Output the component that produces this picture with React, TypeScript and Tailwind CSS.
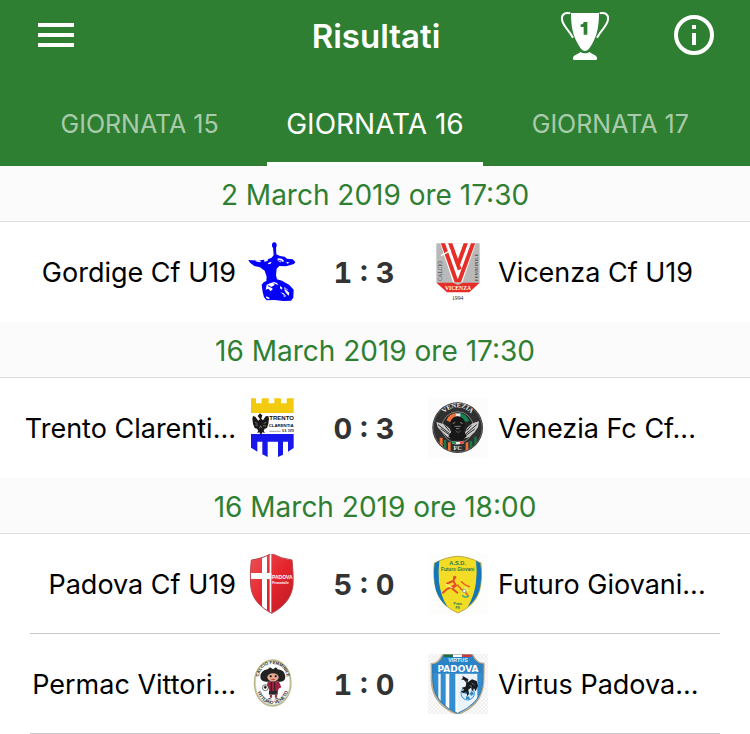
import { useState, type ReactNode } from "react";

type Team = { name: string; crest: ReactNode };
type Match = { home: Team; away: Team; score: string };
type Day = { label: string; matches: Match[]; divided: boolean };

function Crest({ title, box, children }: { title: string; box: string; children: ReactNode }) {
  return (
    <svg viewBox={box} className="block size-[60px]" role="img" aria-label={title} fontFamily="'Liberation Sans', Arial, sans-serif">
      {children}
    </svg>
  );
}

const gordige = (
  <Crest title="Gordige" box="6 21 180 180">
    <ellipse cx="103" cy="31" rx="7" ry="9" fill="#0500fa" />
    <path d="M99 36h9l1 22 11 5 14 2 7 6 17 2 8 8-4 6-24 7-20-1-8 8-2 20 3 12 15 4 22 13 13 14-1 24-7 9-22 1-28-3-23 1-8-9-4-16-3-22 6-7 8-4 1-13-6-18-14-10-17-4-13-10-5-8 28 2 32-5 10-4 6-8z" fill="#0500fa" />
    <g fill="#fff">
      <path d="M50 75l14 3-5 4-12-3zM72 73l13-2-3 7-9 2zM84 84l11-4-3 6-7 2zM113 70l13 1 7 8-12 3-8-5zM139 80l10 3-8 3z" />
      <path d="M80 149l10-4 12-4 9 3 4 6-10-1-10 6 3 8-6 6-7-8-8 3zM120 153l7 5-1 6-6-4zM133 156l9 7 6 11-2 8-6-6-6-9zM121 172l10 3 7 8-5 4-4-6zM79 184l11 5-4 3-8-3z" />
    </g>
    <path d="M84 152l12 6M101 146l12 5M135 161l12 10M122 174l12 9M115 76l11 3" fill="none" stroke="#0500fa" strokeWidth="3" />
  </Crest>
);

const vicenza = (
  <Crest title="Vicenza" box="9 21 180 180">
    <defs>
      <clipPath id="vicenzaField"><path d="M34 25h130v117H34z" /></clipPath>
    </defs>
    <path d="M34 25h130v117l-32 29H66l-32-29z" fill="#b9b9b9" />
    <g clipPath="url(#vicenzaField)">
      <path d="M44 20h110L110 148H86z" fill="#fff" />
      <path d="M52 20l44 124M74 20l30 84M146 20l-46 126M124 20l-26 72" fill="none" stroke="#e52e28" strokeWidth="12" />
      <path d="M48 62l30-16" stroke="#fff" strokeWidth="4" />
    </g>
    <path d="M34 143h50l15 7 15-7h50l-31 29H66z" fill="#e52e28" />
    <text x="99" y="166" textAnchor="middle" fontSize="17" fontWeight="700" fontFamily="'Liberation Serif', serif" fill="#fff">VICENZA</text>
    <text transform="translate(51 138) rotate(-90)" fontSize="16" fontFamily="'Liberation Serif', serif" fill="#333">CALCIO</text>
    <text transform="translate(160 139) rotate(-90)" fontSize="15" fontFamily="'Liberation Serif', serif" fill="#333">FEMMINILE</text>
    <text x="98" y="194" textAnchor="middle" fontSize="17" fontFamily="'Liberation Serif', serif" fill="#222">1994</text>
  </Crest>
);

const trento = (
  <Crest title="Trento Clarentia" box="6 24 180 180">
    <path d="M33 25h15v15h17V25h21v15h17V25h20v15h17V25h21v44H33z" fill="#f2ca10" />
    <path d="M33 69h128v62H33z" fill="#fff" />
    <path d="M33 132h128v42l-17 11v-30h-15v39l-15 7v-46H83v46l-16-8v-38H52v30l-19-12z" fill="#1717ec" />
    <g fill="#171717">
      <path d="M60 70l7 6-3 10 5 5 8-12 8-1 2 8-2 15-4 13-7 2-3 6 4 7-8-2-4 9-5-9-7 2 4-7-4-6-7-2-5-13-2-15 2-8 7 2 9 12 5-5-7-9z" />
    </g>
    <path d="M44 97l8 3M46 106l8-1M71 100l8-3M69 107l9 1M58 115l4-8 4 8" fill="none" stroke="#999" strokeWidth="2" />
    <g fill="#111" fontWeight="700">
      <text x="88" y="91" fontSize="18">TRENTO</text>
      <text x="86" y="111" fontSize="13">CLARENTIA</text>
      <text x="126" y="127" fontSize="8">S.S. 1978</text>
    </g>
    <path d="M88 124h34" stroke="#777" strokeWidth="2" />
  </Crest>
);

const venezia = (
  <Crest title="Venezia FC" box="9 24 180 180">
    <defs>
      <clipPath id="veneziaDisc"><circle cx="98" cy="113" r="73" /></clipPath>
      <path id="veneziaArc" d="M45 105A53 53 0 0 1 151 105" />
    </defs>
    <path d="M9 24h180v180H9z" fill="#fcfcfc" />
    <circle cx="98" cy="113" r="76" fill="#303030" />
    <circle cx="98" cy="113" r="73" fill="none" stroke="#777" strokeWidth="2" />
    <g clipPath="url(#veneziaDisc)">
      <path d="M44 143h9v45h-9zM69 157h8v40h-8zM122 157h8v40h-8z" fill="#ec7135" />
      <path d="M56 150h8v45h-8zM134 153h8v35h-8zM148 140h7v30h-7z" fill="#1a7849" />
    </g>
    <circle cx="98" cy="112" r="47" fill="#242424" stroke="#aaa" strokeWidth="2" />
    <path d="M64 91q8-20 28-22l1 13q-12 3-17 15z" fill="#ec7136" />
    <path d="M105 69q20 3 28 24l-11 3q-7-11-17-15z" fill="#188153" />
    <path d="M92 70h14v10H92z" fill="#e8e8e8" />
    <path d="M34 96q24 4 40 20l14 31-20-5-17-16-13-14zM162 94q-22 4-36 20l-14 33 20-5 17-15 10-15z" fill="#c7c7c7" />
    <path d="M39 104l35 27M47 116l30 21M155 104l-33 28M149 117l-27 20M59 106l15 18M139 106l-14 16" stroke="#323232" strokeWidth="3" />
    <path d="M76 97q4-17 22-18 18 2 21 18l-2 25 8 17-13 12H84l-14-12 11-17z" fill="#171717" />
    <path d="M83 101l8-4M105 97l8 4M89 109h18M93 116h10" stroke="#bbb" strokeWidth="2" />
    <path d="M92 122q7 10 15 0" fill="none" stroke="#777" strokeWidth="2" />
    <path d="M81 153q18 5 36-1v8q-19 6-36 1z" fill="#eee" />
    <path d="M81 153l12 2v7l-12-1z" fill="#249157" />
    <path d="M105 155l12-3v8l-12 2z" fill="#e44e42" />
    <text fontSize="20" fontWeight="700" fontFamily="'Liberation Serif', serif" fill="#eee">
      <textPath href="#veneziaArc" startOffset="50%" textAnchor="middle">VENEZIA</textPath>
    </text>
    <text x="98" y="180" fontSize="19" textAnchor="middle" fontWeight="700" fontFamily="'Liberation Serif', serif" fill="#eee">FC</text>
  </Crest>
);

const padovaOutline = "M34 42q34-4 60-20 28 16 62 20 5 48 3 76-4 33-27 57-16 16-37 27-22-11-37-27-24-24-26-57-3-35 2-76z";

const padova = (
  <Crest title="Padova" box="6 24 180 180">
    <defs>
      <clipPath id="padovaShield"><path d={padovaOutline} /></clipPath>
      <linearGradient id="padovaRed" x1="0" y1="0" x2="1" y2="1"><stop stopColor="#ef5358" /><stop offset=".5" stopColor="#e4252d" /><stop offset="1" stopColor="#b91b24" /></linearGradient>
    </defs>
    <g clipPath="url(#padovaShield)">
      <path d="M28 20h138v184H28z" fill="url(#padovaRed)" />
      <path d="M66 20h15v61h13v18H81v105H66V99H28V81h38z" fill="#fff" />
      <path d="M89 20h5v184h-5z" fill="#fff" />
    </g>
    <path d={padovaOutline} fill="none" stroke="#b8434a" strokeWidth="3" />
    <text x="96" y="100" fontSize="15" fontWeight="700" fill="#fff">PADOVA</text>
    <text x="97" y="114" fontSize="10" fontWeight="700" fill="#fff">Femminile</text>
  </Crest>
);

const futuro = (
  <Crest title="Futuro Giovani" box="9 24 180 180">
    <path d="M9 24h180v180H9z" fill="#fdfdfb" />
    <path d="M28 51q42-20 71-20 28 0 69 20 5 49-5 85-13 43-64 65-50-21-64-65-12-38-7-85z" fill="#f2dc26" stroke="#b9aa4b" strokeWidth="3" />
    <path d="M29 52l14-8q-4 30-1 64 6 47 26 75-25-19-35-50-10-38-4-81zM166 52l-13-8q4 33 0 64-4 39-25 75 26-20 35-50 10-38 3-81z" fill="#1476b8" />
    <g fill="#267557" fontWeight="700" textAnchor="middle">
      <text x="98" y="56" fontSize="17">A.S.D.</text>
      <text x="98" y="76" fontSize="14">Futuro Giovani</text>
      <text x="98" y="177" fontSize="10">Prata</text>
      <text x="98" y="190" fontSize="9">PN</text>
    </g>
    <g fill="none" strokeLinecap="round" strokeWidth="6">
      <path d="M89 94l-4 11 8 14-12 8 16 13M84 105l-18 8M88 118l-23 12-11 10" stroke="#e4502c" />
      <path d="M109 107l12 10 12 5M107 129l14 9 8 11M98 117l10 12" stroke="#e75525" strokeWidth="4" />
      <path d="M64 116l17 9M120 124l8 10" stroke="#faf28b" strokeWidth="4" />
      <path d="M113 149q9 8 17 1" stroke="#26a68a" strokeWidth="4" />
    </g>
    <circle cx="89" cy="94" r="5" fill="#db552d" />
    <circle cx="118" cy="135" r="5" fill="#fff" stroke="#4598a1" strokeWidth="2" />
  </Crest>
);

const permac = (
  <Crest title="Permac Vittorio Veneto" box="6 18 180 180">
    <defs>
      <path id="permacTop" d="M56 112Q52 50 98 48Q144 50 142 112" />
      <path id="permacBottom" d="M48 108Q54 166 98 168Q142 166 149 108" />
    </defs>
    <ellipse cx="98" cy="105" rx="55" ry="69" fill="#fff" stroke="#bbb889" strokeWidth="4" />
    <ellipse cx="98" cy="105" rx="52" ry="66" fill="none" stroke="#777850" strokeWidth="1" />
    <path d="M90 58l9 6 9-6 5 6q21 2 23 21 0 18-18 16H80q-19 1-19-16 2-18 22-21z" fill="#222" />
    <ellipse cx="99" cy="88" rx="17" ry="12" fill="#e6aa91" />
    <circle cx="92" cy="85" r="3" /><circle cx="107" cy="85" r="3" />
    <path d="M94 94h11" stroke="#b93737" strokeWidth="3" />
    <path d="M83 101h34l7 17-8 4-3 9H88l-1-9-7-4z" fill="#9e2140" />
    <path d="M94 102v28M104 102v28" stroke="#222" strokeWidth="3" />
    <path d="M87 129h26v11H87z" fill="#292727" />
    <path d="M93 140v9M108 140v9" stroke="#923b46" strokeWidth="7" />
    <path d="M83 154q4-6 13 0zM103 154q9-6 14 0z" fill="#222" />
    <circle cx="76" cy="119" r="9" fill="#fff" stroke="#333" strokeWidth="2" />
    <path d="M75 112l6 5-4 6-6-4z" fill="#222" />
    <g fill="#272727" fontWeight="700">
      <text fontSize="13"><textPath href="#permacTop" startOffset="50%" textAnchor="middle">CALCIO FEMMINILE</textPath></text>
      <text fontSize="14"><textPath href="#permacBottom" startOffset="50%" textAnchor="middle">VITTORIO VENETO</textPath></text>
    </g>
  </Crest>
);

const virtus = (
  <Crest title="Virtus Padova" box="9 18 180 180">
    <defs>
      <pattern id="virtusChecks" width="12" height="12" patternUnits="userSpaceOnUse"><path d="M0 0h12v12H0z" fill="#fafafa" /><path d="M0 0h6v6H0zM6 6h6v6H6z" fill="#f1f1f1" /></pattern>
      <clipPath id="virtusShield"><path d="M20 48q19 1 34-28h88q12 27 34 27 0 19-1 54-2 38-25 65-22 22-52 33-33-13-52-34-24-27-26-64z" /></clipPath>
    </defs>
    <path d="M9 18h180v180H9z" fill="url(#virtusChecks)" />
    <g clipPath="url(#virtusShield)">
      <path d="M9 18h180v186H9z" fill="#fafafa" />
      <path d="M15 76h25v88H15zM47 76h15v112H47zM73 76h18v126H73zM157 76h20v81h-20zM139 76h10v111h-10z" fill="#318ed0" />
      <path d="M98 76h58v73q-17 32-58 47z" fill="#eaf4fa" />
      <path d="M9 18h180v59H9z" fill="#2983c7" />
    </g>
    <path d="M20 48q19 1 34-28h88q12 27 34 27 0 19-1 54-2 38-25 65-22 22-52 33-33-13-52-34-24-27-26-64z" fill="none" stroke="#b9ac91" strokeWidth="6" />
    <path d="M22 50q21 0 34-28h84q13 27 34 27 0 19-1 51-2 38-25 63-21 21-50 33-31-13-50-34-23-26-24-62z" fill="none" stroke="#2677b8" strokeWidth="3" />
    <path d="M56 20h28v7H56z" fill="#1d6a45" /><path d="M84 20h27v7H84z" fill="#fff" /><path d="M111 20h28v7h-28z" fill="#c93742" />
    <text x="99" y="42" fontSize="16" fontWeight="700" textAnchor="middle" fill="#e6f3fc">VIRTUS</text>
    <text x="99" y="71" fontSize="27" fontWeight="700" fontFamily="'DejaVu Sans', sans-serif" textAnchor="middle" fill="#fff">PADOVA</text>
    <circle cx="128" cy="136" r="20" fill="#d9edf8" stroke="#368fce" strokeWidth="3" />
    <path d="M120 121l9 6-3 10-12-1zM140 129l7 8-8 7-6-7zM123 145l10 1 2 9-12-2z" fill="#318ccb" />
    <path d="M112 83l18 11-2 9 13-9 14 5 4 15-7 16-5-9-6 10-2-13-9 7 2 12-5 8-3-13-9 3-8-4 11-5-8-7 12-3 2-12-7-8-9-2 6-4z" fill="#181b1e" />
    <path d="M124 98l4 5M140 105l9 6M134 113l7 2" stroke="#8397a5" strokeWidth="2" />
  </Crest>
);

const days: Day[] = [
  {
    label: "2 March 2019 ore 17:30",
    divided: false,
    matches: [{ home: { name: "Gordige Cf U19", crest: gordige }, away: { name: "Vicenza Cf U19", crest: vicenza }, score: "1 : 3" }],
  },
  {
    label: "16 March 2019 ore 17:30",
    divided: false,
    matches: [{ home: { name: "Trento Clarenti...", crest: trento }, away: { name: "Venezia Fc Cf...", crest: venezia }, score: "0 : 3" }],
  },
  {
    label: "16 March 2019 ore 18:00",
    divided: true,
    matches: [
      { home: { name: "Padova Cf U19", crest: padova }, away: { name: "Futuro Giovani...", crest: futuro }, score: "5 : 0" },
      { home: { name: "Permac Vittori...", crest: permac }, away: { name: "Virtus Padova...", crest: virtus }, score: "1 : 0" },
    ],
  },
];

const tabs = ["GIORNATA 15", "GIORNATA 16", "GIORNATA 17"];

function MatchRow({ match, divided }: { match: Match; divided: boolean }) {
  return (
    <li>
      <div className={`grid grid-cols-[1fr_60px_126px_60px_1fr] items-center pr-5 ${divided ? "h-[99px]" : "h-[100px]"}`}>
        <span className="whitespace-nowrap pt-0.5 pr-1.5 text-right">{match.home.name}</span>
        {match.home.crest}
        <strong className="pt-0.5 pr-0.5 text-center text-[29px] font-bold text-[#333333] tabular-nums">{match.score}</strong>
        {match.away.crest}
        <span className="whitespace-nowrap pt-0.5 pl-2.5">{match.away.name}</span>
      </div>
      {divided && <div className="mx-[30px] h-px bg-[#c8c7cc]" />}
    </li>
  );
}

export default function App() {
  const [active, setActive] = useState(1);
  return (
    <div className="min-h-screen bg-white font-['Inter','Liberation_Sans',sans-serif] text-[27px] leading-9 text-black">
      <header className="bg-[#2e7f32] text-white">
        <div className="grid h-[70px] grid-cols-[1fr_auto_1fr] items-center pr-9 pl-[38px]">
          <button type="button" aria-label="Menu" className="flex w-9 flex-col gap-1.5">
            <span className="h-1 bg-white" />
            <span className="h-1 bg-white" />
            <span className="h-1 bg-white" />
          </button>
          <h1 className="pt-0.5 text-[33px] font-semibold">Risultati</h1>
          <div className="flex items-center justify-end gap-[65px]">
            <button type="button" aria-label="Classifica">
              <svg viewBox="0 -3 144 144" className="block size-12 overflow-visible" fill="none">
                <path d="M28 4C11 0 1 8 3 22c2 20 20 30 33 55M116 4c17-4 27 4 25 18-2 20-20 30-33 55" stroke="#fff" strokeWidth="6" />
                <path d="M30 3h84c0 35-4 62-18 88-10 19-16 26-24 26s-14-7-24-26C34 65 30 38 30 3z" fill="#fff" />
                <path d="M36 137c2-9 14-9 22-17 8 5 20 5 28 0 8 8 20 8 22 17 1 5-1 7-6 7H42c-5 0-7-2-6-7z" fill="#fff" />
                <path d="M68 30h11v38H68V45h-9v-8c7 0 8-3 9-7z" fill="#2e7f32" />
              </svg>
            </button>
            <button type="button" aria-label="Informazioni">
              <svg viewBox="0 0 40 40" className="block size-10" fill="none">
                <circle cx="20" cy="20" r="18" stroke="#fff" strokeWidth="4" />
                <path d="M18 10h4v4h-4zM18 18h4v12h-4z" fill="#fff" />
              </svg>
            </button>
          </div>
        </div>
        <nav className="grid grid-cols-3 px-[22px] pt-3" role="tablist">
          {tabs.map((tab, i) => (
            <button
              key={tab}
              type="button"
              role="tab"
              aria-selected={i === active}
              onClick={() => setActive(i)}
              className={`mx-auto h-[84px] w-[216px] border-y-4 border-t-transparent whitespace-nowrap ${i === active ? "border-b-white text-[28px]" : "border-b-transparent text-[25px] text-white/60"}`}
            >
              {tab}
            </button>
          ))}
        </nav>
      </header>
      <main>
        {days.map((day) => (
          <section key={day.label}>
            <h2 className="flex h-14 items-center justify-center border-b border-[#dedede] bg-[#fbfbfb] pt-0.5 text-[28px] text-[#2e7f32]">{day.label}</h2>
            <ul>
              {day.matches.map((match) => (
                <MatchRow key={match.home.name} match={match} divided={day.divided} />
              ))}
            </ul>
          </section>
        ))}
      </main>
    </div>
  );
}
